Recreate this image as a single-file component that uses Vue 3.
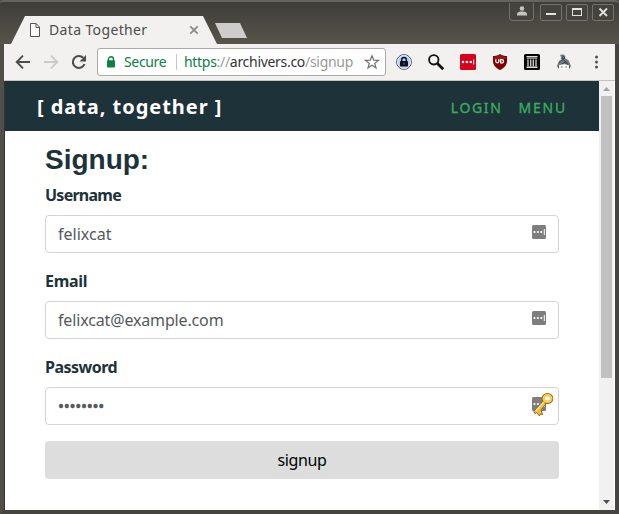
<script setup>
const fields = [
  { label: 'Username', value: 'felixcat', cls: 'user' },
  { label: 'Email', value: 'felixcat@example.com', cls: 'email' },
  { label: 'Password', value: '••••••••', cls: 'password', key: true }
]
</script>

<template>
  <div class="window">
    <div class="titlebar">
      <div class="tab">
        <svg class="doc" width="12" height="14" viewBox="0 0 12 14"><path d="M1.5.5h5.500l3.500 3.500v9.500h-9zM7 .5v4h3.500" fill="#fbfbfa" stroke="#555" /></svg>
        <span class="tab-title">Data Together</span>
        <svg class="tab-close" width="10" height="10" viewBox="0 0 10 10"><path d="M1.300 1.300l7.400 7.400M8.700 1.300L1.300 8.700" stroke="#868684" stroke-width="1.700" /></svg>
      </div>
      <div class="new-tab"></div>
      <div class="controls">
        <div class="profile">
          <svg width="10" height="10" viewBox="0 0 10 10"><circle cx="5" cy="2.500" r="2.300" fill="#c5c4be" /><path d="M0 9.500V8c0-1.500 2-2.500 3.500-2.500h3C8 5.500 10 6.500 10 8v1.500z" fill="#c5c4be" /></svg>
        </div>
        <div class="ctl"><svg width="20" height="15" viewBox="0 0 20 15"><path d="M5 9h10" stroke="#e4e4de" stroke-width="2" /></svg></div>
        <div class="ctl"><svg width="20" height="15" viewBox="0 0 20 15"><path d="M5 3.500h10M5 4.500h10M5.500 4v7M14.500 4v7M5 10.500h10" fill="none" stroke="#e4e4de" /></svg></div>
        <div class="ctl"><svg width="20" height="15" viewBox="0 0 20 15"><path d="M6.500 3.500l7.500 7.500M14 3.500L6.500 11" stroke="#e4e4de" stroke-width="1.800" /></svg></div>
      </div>
    </div>

    <div class="toolbar">
      <svg class="nav" width="16" height="16" viewBox="0 0 16 16"><path d="M15 8H2M8 1.700L1.700 8L8 14.300" fill="none" stroke="#4c4c4c" stroke-width="1.900" /></svg>
      <svg class="nav fwd" width="16" height="16" viewBox="0 0 16 16"><path d="M1 8h13M8 1.700L14.300 8L8 14.300" fill="none" stroke="#cbcac8" stroke-width="1.900" /></svg>
      <svg class="nav reload" width="16" height="16" viewBox="0 0 16 16"><path d="M13.500 10A6 6 0 1 1 12.200 3.800" fill="none" stroke="#4c4c4c" stroke-width="2.100" /><path d="M15 1v6.500H8.500z" fill="#4c4c4c" /></svg>
      <div class="omnibox">
        <svg class="lock" width="10" height="12" viewBox="0 0 10 12"><path d="M2.500 5V3.200a2.500 2.500 0 0 1 5 0V5" fill="none" stroke="#0b8043" stroke-width="1.400" /><rect x="1" y="4.300" width="8" height="7.200" rx=".8" fill="#0b8043" /></svg>
        <span class="secure">Secure</span>
        <i class="divider"></i>
        <span class="url"><b>https</b>://<em>archivers.co</em>/signup</span>
        <svg class="star" width="16" height="16" viewBox="0 0 16 16"><path d="M8 1.800l1.700 4.400 4.700.2-3.700 3 1.300 4.500L8 11.300l-4 2.600 1.300-4.500-3.700-3 4.700-.2z" fill="none" stroke="#6e6e6e" stroke-width="1.200" /></svg>
      </div>
      <div class="extensions">
        <svg width="16" height="16" viewBox="0 0 16 16"><circle cx="8" cy="8" r="7.400" fill="#b9cdfb" stroke="#53545b" /><circle cx="8" cy="8" r="6.500" fill="none" stroke="#e4ebff" /><path d="M5.700 8V5.700a2.300 2.300 0 0 1 4.600 0V8" fill="none" stroke="#10131d" stroke-width="1.500" /><rect x="4" y="7" width="8" height="5.500" rx=".7" fill="#10131d" /><path d="M8 8.500v2" stroke="#668" /></svg>
        <svg width="16" height="16" viewBox="0 0 16 16"><circle cx="5.800" cy="5.800" r="4.700" fill="#f5f5f4" stroke="#111" stroke-width="1.800" /><path d="M9.200 9.200l6 6" stroke="#111" stroke-width="2.800" /></svg>
        <svg width="16" height="16" viewBox="0 0 16 16"><rect width="16" height="16" rx="1.500" fill="#d8001b" /><g fill="#fff"><circle cx="3" cy="8" r="1.300" /><circle cx="6.900" cy="8" r="1.300" /><circle cx="10.800" cy="8" r="1.300" /><path d="M13.200 5.500h1v5h-1z" /></g></svg>
        <svg width="16" height="16" viewBox="0 0 16 16"><path d="M8 0c2 1.500 4.300 2 7 2v5c0 4-2.500 7-7 9c-4.500-2-7-5-7-9V2c2.700 0 5-.5 7-2z" fill="#800000" /><path d="M8 1c2 1 4 1.700 6 1.800V5H2V2.800C4 2.700 6 2 8 1z" fill="#a43a3a" opacity=".45" /><path d="M3.800 5.300v2a1.500 1.500 0 0 0 3 0v-2M8.600 9V5.700h1.300a1.600 1.600 0 0 1 0 3.200H8" fill="none" stroke="#fff" stroke-width="1.300" /></svg>
        <svg width="16" height="16" viewBox="0 0 16 16"><rect width="16" height="16" rx="1.500" fill="#050505" /><path d="M2.500 2.800h11M2.500 13.300h11" stroke="#ddd" stroke-width="1.400" /><path d="M3 4.500h10" stroke="#888" /><path d="M4 5.500v7M6.700 5.500v7M9.300 5.500v7M12 5.500v7" stroke="#c8c8c8" stroke-width="1.400" /></svg>
        <svg width="16" height="16" viewBox="0 0 16 16"><path d="M4 1Q7-.5 9.500 2L8.800 4.500Q13 5 13.800 9l1.700 4.500-2.700-2H3.300L.5 13.500L2 9Q3 6 5.800 5z" fill="#7b7f81" /><path d="M5.500 4.500l2-2.500 1.500 2.500zM3 9l4-3.500L12.500 10M4.500 11L10.500 7M8 8l4 3" fill="none" stroke="#3f4244" stroke-width="1" /><path d="M6 1.500h2M10 6.500l1 1M4 8.500l1-1" stroke="#2783bd" stroke-width="1.500" /><path d="M3 11.500q5-2.400 10 0v2.500q-5 2.500-10 0z" fill="#fff" /><path d="M5 13h1.500M9.500 13H11M2.500 11.500v3M13.500 11.500v3" stroke="#555" /></svg>
        <svg class="dots" width="16" height="16" viewBox="0 0 16 16"><g fill="#505050"><circle cx="8.500" cy="3" r="1.500" /><circle cx="8.500" cy="8" r="1.500" /><circle cx="8.500" cy="13" r="1.500" /></g></svg>
      </div>
    </div>

    <div class="viewport">
      <div class="page">
        <header class="site-header">
          <span class="brand">[ data, together ]</span>
          <nav><a class="login">LOGIN</a><a class="menu">MENU</a></nav>
        </header>
        <main>
          <h1>Signup:</h1>
          <div v-for="f in fields" :key="f.label" class="field">
            <label :class="f.cls">{{ f.label }}</label>
            <div class="input">
              <span :class="f.cls">{{ f.value }}</span>
              <svg class="manager" width="22" height="28" viewBox="0 0 22 28">
                <rect x="0" y="7" width="14" height="14" rx="1.500" fill="#7e7e7e" />
                <g fill="#fff"><circle cx="2.500" cy="14" r="1.100" /><circle cx="5.900" cy="14" r="1.100" /><circle cx="9.300" cy="14" r="1.100" /><path d="M11.800 11h1v6h-1z" /></g>
                <g v-if="f.key" stroke-linejoin="round"><path d="M11.600 10.500L1.800 21.500l1 2 2-.8 2.700 3.300.8-2 2.400.5-1.700-4.500 5-6z" fill="#f2bd3c" stroke="#8b5b18" stroke-width=".9" /><ellipse cx="15.500" cy="8.500" rx="3.700" ry="3.300" fill="#fff" stroke="#a06a1a" stroke-width="4.300" /><ellipse cx="15.500" cy="8.500" rx="3.700" ry="3.300" fill="#fff" stroke="#f6ce55" stroke-width="2.500" /><path d="M3.500 21l9-9.500" stroke="#ffe892" stroke-width="1.200" /></g>
              </svg>
            </div>
          </div>
          <button>signup</button>
        </main>
      </div>
      <div class="scrollbar">
        <svg width="15" height="15" viewBox="0 0 15 15"><path d="M7.500 6L11 10H4z" fill="#a3a3a3" /></svg>
        <div class="thumb"></div>
        <svg width="15" height="15" viewBox="0 0 15 15"><path d="M4 5h7L7.500 9z" fill="#505050" /></svg>
      </div>
    </div>
  </div>
</template>

<style>
body { margin: 0; overflow: hidden; background: #3c3b37; }
</style>

<style scoped>
* { box-sizing: border-box; }
svg { display: block; flex: none; }
.window { width: 619px; height: 514px; border: solid #45443f; border-width: 0 4px 4px; border-left-color: #504e47; background: #fff; font-family: "Noto Sans", sans-serif; display: flex; flex-direction: column; white-space: nowrap; box-shadow: inset 1px 0 #33322e; }
.titlebar { height: 44px; margin: 0 -4px; padding-left: 11px; flex: none; display: flex; align-items: flex-start; background: linear-gradient(#3f3e3a, #56544b); border-top: 2px solid #65645f; border-radius: 4px 4px 0 0; }
.tab { width: 206px; height: 28px; margin-top: 14px; padding-left: 18px; display: flex; align-items: center; background: #f2f1f0; clip-path: polygon(14px 0, 192px 0, 206px 100%, 0 100%); }
.tab-title { width: 100px; margin: -2px 0 0 8px; color: #4c4c4c; font-size: 14px; letter-spacing: .36px; }
.tab-close { margin-left: 40px; }
.new-tab { width: 33px; height: 15px; margin: 21px 0 0 -3px; background: #cecdcb; clip-path: polygon(1px 0, 26px 0, 33px 100%, 8px 100%); }
.controls { display: flex; margin: 1px 5px 0 auto; gap: 4px; }
.profile { width: 25px; height: 18px; margin-right: 2px; border: 1px solid #74736b; border-top: 0; border-radius: 0 0 4px 4px; display: flex; justify-content: center; padding-top: 3px; background: #45433e; }
.ctl { width: 22px; height: 17px; border: 1px solid #74736b; border-radius: 2px; background: #45433e; margin-top: 1px; }
.toolbar { height: 37px; flex: none; display: flex; align-items: center; padding-left: 11px; background: #f2f1f0; border-bottom: 1px solid #c5c4c2; }
.fwd { margin-left: 12px; }
.reload { margin-left: 12px; }
.omnibox { width: 289px; height: 28px; margin-left: 10px; padding-left: 8px; border: 1px solid #acaba9; border-radius: 3px; background: #fff; display: flex; align-items: center; font-size: 14px; }
.secure { width: 43px; margin: -2px 0 0 8px; color: #0b8043; letter-spacing: -.35px; }
.divider { width: 1px; height: 16px; margin: 0 7px 0 9px; background: #c7c7c7; }
.url { width: 171px; margin-top: -2px; color: #999; letter-spacing: -.3px; }
.url b { color: #0b8043; font-weight: 400; }
.url em { color: #333; font-style: normal; }
.star { margin-left: 9px; }
.extensions { display: flex; gap: 16px; margin-left: 10px; }
.viewport { height: 429px; flex: none; margin-left: 1px; display: flex; }
.page { width: 594px; background: #fff; }
.site-header { height: 50px; padding: 2px 32px 0 32px; background: #1e3239; display: flex; align-items: center; justify-content: space-between; color: #fff; }
.brand { font-size: 20px; line-height: 28px; font-weight: 700; letter-spacing: .95px; }
nav { display: flex; gap: 16px; color: #3aad5c; font-size: 14px; -webkit-text-stroke: .35px #3aad5c; }
.login { letter-spacing: 1.6px; }
.menu { letter-spacing: 1.8px; }
main { padding: 12px 40px 0; color: #1e3239; }
h1 { margin: 0 0 5px; height: 34px; font: bold 28px/33px "Liberation Sans", Arial, sans-serif; }
.field { height: 86px; }
label { display: block; height: 22px; margin-bottom: 11px; font-size: 16px; line-height: 26px; font-weight: 700; letter-spacing: -.5px; }
label.user { letter-spacing: -.75px; }
label.email { letter-spacing: -.3px; }
.input { height: 38px; width: 514px; border: 1px solid #d4d4d4; border-radius: 4px; padding: 0 4px 0 12px; display: flex; align-items: center; justify-content: space-between; font-size: 16px; color: #55595c; }
.input .email { letter-spacing: -.15px; }
.input .user { letter-spacing: .02px; }
.input .password { letter-spacing: -.25px; -webkit-text-stroke: .5px #55595c; }
.manager { margin-top: -4px; }
button { display: block; width: 514px; height: 38px; margin-top: 1px; padding: 0; border: 0; border-radius: 4px; background: #ddd; font: 16px "Noto Sans", sans-serif; letter-spacing: -.4px; color: #000; }
.scrollbar { width: 15px; background: #f1f1f1; display: flex; flex-direction: column; }
.thumb { width: 11px; height: 282px; margin: 0 2px auto; background: #c1c1c1; }
</style>
